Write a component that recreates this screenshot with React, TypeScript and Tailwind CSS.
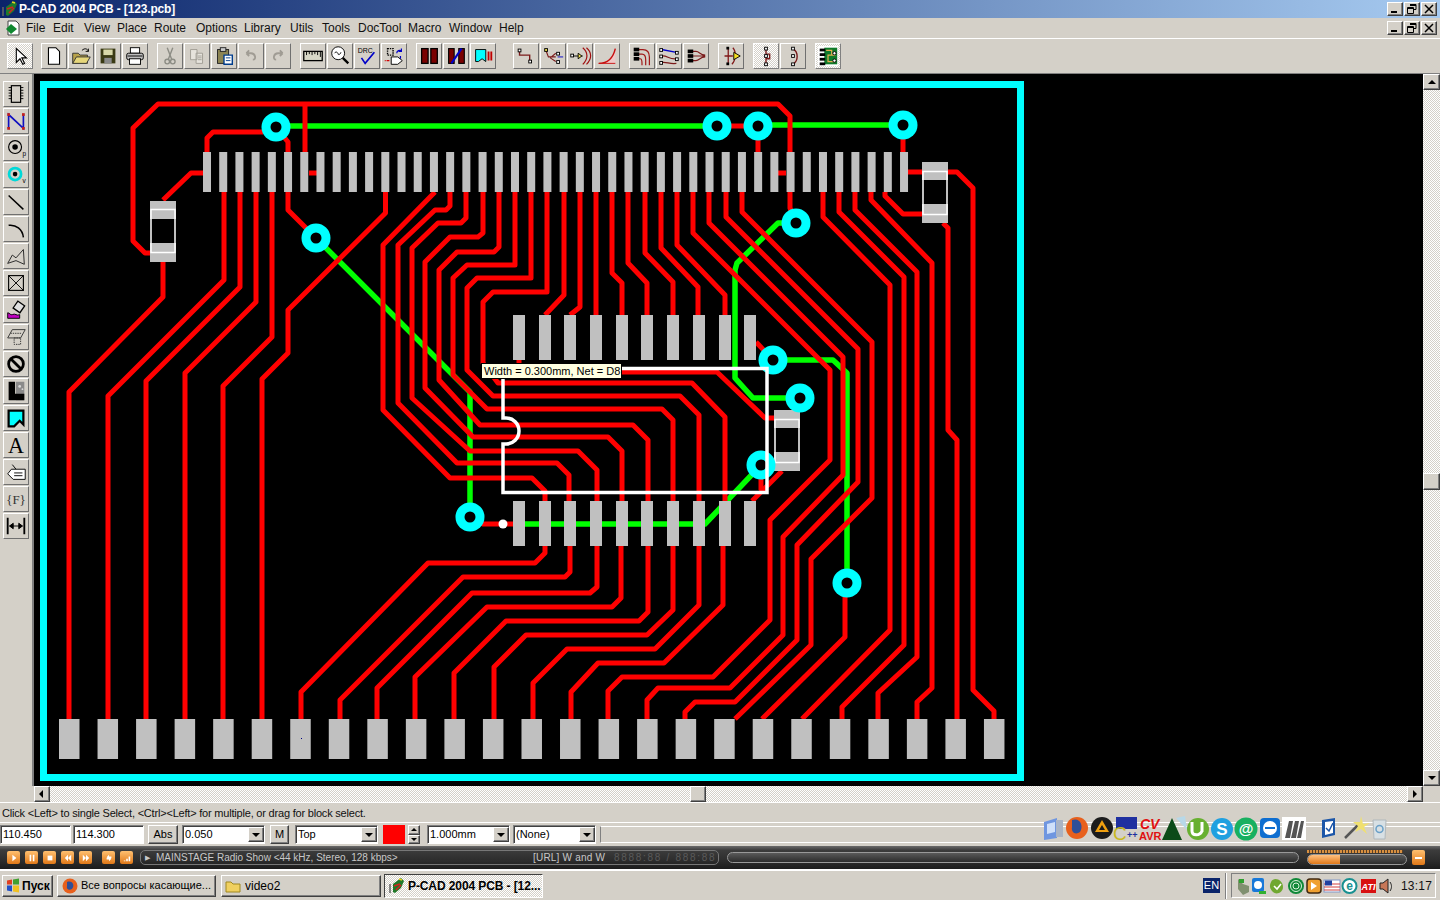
import type { ReactNode } from 'react';

const raised = 'border border-t-white border-l-white border-r-[#404040] border-b-[#404040] bg-[#d4d0c8] shadow-[inset_-1px_-1px_0_#808080]';
const toolRaised = 'border border-t-white border-l-white border-r-[#707070] border-b-[#707070] bg-[#d4d0c8]';
const sunken = 'border border-t-[#808080] border-l-[#808080] border-r-white border-b-white bg-white shadow-[inset_1px_1px_0_#404040]';
const dither = 'bg-[repeating-conic-gradient(#d4d0c8_0_25%,#ffffff_0_50%)] bg-[length:2px_2px]';
const pressed = 'border border-t-[#404040] border-l-[#404040] border-r-white border-b-white';

const TRACES = [
  '150,253 145,253 133,241 133,128 158,104 778,104 790,116 790,208 796,223',
  '305,104 305,152',
  '263,132 213,132 207,138 207,152',
  '276,127 288,142 288,210 316,238',
  '309,173 317,173',
  '203,173 191,173 163,200',
  '163,262 163,297 69,392 69,719',
  '224,192 224,280 108,396 108,719',
  '240,192 240,287 146,381 146,719',
  '256,192 256,302 185,373 185,719',
  '272,192 272,337 223,386 223,719',
  '385.5,192 385.5,213 288,310 288,353 262,379 262,719',
  '435,192 383,245 383,410 450,478 532,478 545,491 545,501',
  '450,192 450,206 446,210 435,210 398,245 398,403 457,463 557,463 569,475 569,501',
  '466,192 466,218 461,223 438,223 412,248 412,398 470,451 578,451 597,470 597,501',
  '483,192 483,233 478,237 450,237 425,262 425,388 473,437 608,437 622,451 622,501',
  '499,192 499,247 494,252 457,252 439,270 439,380 480,425 633,425 648,440 648,501',
  '515,192 515,265 467,265 453,278 453,375 487,409 662,409 673,420 673,501',
  '531,192 531,278 477,278 467,288 467,370 493,396 680,396 699,415 699,501',
  '547,192 547,292 493,292 483,302 483,363 498,383 692,383 725,417 725,501',
  '564,192 564,295 545,315',
  '580,192 580,307 570,315',
  '596,192 596,315',
  '612,192 612,273 622,283 622,315',
  '628,192 628,263 647,283 647,315',
  '645,192 645,253 673,282 673,315',
  '661,192 661,248 698,287 698,315',
  '677,192 677,245 725,295 725,315',
  '519,360 519,372 717,372 765,418 775,418',
  '693,192 693,233 830,370 830,460 770,520 770,620 713,677 622,677 608,691 608,719',
  '709,192 709,223 843,357 843,475 783,537 783,635 730,688 658,688 647,700 647,719',
  '726,192 726,217 858,349 858,482 797,545 797,640 735,702 695,702 685,712 685,719',
  '742,192 742,212 872,342 872,498 811,559 811,645 735,719',
  '758,126 758,152',
  '903,126 903,152',
  '717,126 758,126',
  '778,173 786,173',
  '908,172 923,172',
  '948,172 957,172 973,188 973,690 994,711 994,719',
  '885,192 885,196 903,214 923,214',
  '943,223 948,228 948,430 957,440 957,719',
  '823,192 823,217 890,285 890,630 802,719',
  '839,192 839,212 904,277 904,645 842,707 842,719',
  '855,192 855,210 917,272 917,657 878,693 878,719',
  '871,192 871,200 932,263 932,688 917,702 917,719',
  '847,583 845,597 845,637 762,719',
  '756,342 773,360',
  '782,471 752,501',
  '761,465 761,490',
  '470,517 483,524 513,524',
  '545,546 545,553 535,563 428,563 301,692 301,719',
  '570,546 570,572 565,577 463,577 340,700 340,719',
  '597,546 597,587 590,593 472,593 377,688 377,719',
  '621,546 621,598 612,607 487,607 415,677 415,719',
  '648,546 648,612 639,621 506,621 454,673 454,719',
  '673,546 673,610 647,635 526,635 494,667 494,719',
  '699,546 699,605 655,649 567,649 533,683 533,719',
  '723,546 723,605 664,663 598,663 571,692 571,719',
];

const GREEN = [
  '276,126 717,126',
  '758,125 903,125',
  '316,238 470,392 470,517',
  '796,223 778,223 737,263 735,270 735,378 753,398 800,398',
  '773,360 833,360 847,373 847,583',
  '513,524 705,524 761,465',
];

const VIAS = [
  [276, 127], [316, 238], [717, 126], [758, 126], [903, 125], [796, 223],
  [773, 360], [800, 398], [761, 465], [470, 517], [847, 583],
];

const ICX = [513, 539, 564, 590, 616, 641, 667, 693, 719, 744];

function Chip({ x, y }: { x: number; y: number }) {
  return (
    <g>
      <rect x={x} y={y} width="26" height="61" fill="#c0c0c0" />
      <rect x={x} y={y + 18} width="26" height="24" fill="#000" />
    </g>
  );
}

function Board() {
  return (
    <svg viewBox="34 74 1389 712" className="block h-[712px] w-[1389px]">
      <rect x="34" y="74" width="1389" height="712" fill="#000" />
      <rect x="43.5" y="84.5" width="977" height="693" fill="none" stroke="#00ffff" strokeWidth="7" />
      {GREEN.map((p) => (
        <polyline key={p} points={p} fill="none" stroke="#00ff00" strokeWidth="5.5" strokeLinejoin="round" />
      ))}
      {TRACES.map((p) => (
        <polyline key={p} points={p} fill="none" stroke="#ff0000" strokeWidth="5" strokeLinejoin="round" />
      ))}
      {Array.from({ length: 44 }, (_, i) => (
        <rect key={i} x={203 + i * 16.21} y="152" width="8" height="40" fill="#c0c0c0" />
      ))}
      {Array.from({ length: 25 }, (_, i) => (
        <rect key={i} x={59 + i * 38.54} y="719" width="20.5" height="40" fill="#c0c0c0" />
      ))}
      {ICX.map((x) => (
        <g key={x}>
          <rect x={x} y="315" width="12" height="45" fill="#c0c0c0" />
          <rect x={x} y="501" width="12" height="45" fill="#c0c0c0" />
        </g>
      ))}
      <Chip x={150} y={201} />
      <Chip x={922} y={162} />
      <Chip x={774} y={410} />
      <rect x="151" y="209.5" width="24" height="43" fill="none" stroke="#fff" strokeWidth="1.5" />
      <rect x="923" y="171.5" width="24" height="43" fill="none" stroke="#fff" strokeWidth="1.5" />
      <rect x="775" y="419.5" width="24" height="43" fill="none" stroke="#fff" strokeWidth="1.5" />
      {VIAS.map(([x, y]) => (
        <g key={`${x}-${y}`}>
          <circle cx={x} cy={y} r="14.5" fill="#00ffff" />
          <circle cx={x} cy={y} r="5.5" fill="#000" />
        </g>
      ))}
      <path d="M503 368.5H767V492.5H503V444H506A13 13 0 0 0 506 418H503Z" fill="none" stroke="#fff" strokeWidth="3.5" />
      <circle cx="503" cy="524" r="4.5" fill="#fff" />
      <rect x="301" y="738" width="1" height="1" fill="#000080" />
    </svg>
  );
}

function Glyph({ children }: { children: ReactNode }) {
  return (
    <svg viewBox="0 0 26 26" className="h-[24px] w-[24px]">
      {children}
    </svg>
  );
}

const TOP_ICONS: ReactNode[][] = [
  [
    <>
      <path d="M9 5v15l4-4 3 6 2-1-3-6h5z" fill="#fff" stroke="#000" strokeWidth="1.2" />
    </>,
  ],
  [
    <path d="M7 4h8l4 4v14H7z" fill="#fff" stroke="#000" strokeWidth="1.2" />,
    <>
      <path d="M4 10h6l2 2h8v9H4z" fill="#b8a24a" stroke="#333" />
      <path d="M4 21l4-7h15l-4 7z" fill="#e6d67a" stroke="#333" />
      <path d="M14 7c3-3 6-2 7 1M21 5v3h-3" fill="none" stroke="#000" />
    </>,
    <>
      <rect x="5" y="5" width="16" height="16" fill="#3a3a14" />
      <rect x="8" y="6" width="10" height="6" fill="#d8d8a8" />
      <rect x="9" y="15" width="8" height="6" fill="#8a8a8a" />
    </>,
    <>
      <rect x="8" y="4" width="10" height="6" fill="#fff" stroke="#000" />
      <rect x="4" y="10" width="18" height="7" rx="2" fill="#bdbdbd" stroke="#000" />
      <rect x="7" y="16" width="12" height="6" fill="#fff" stroke="#000" />
      <path d="M5 13h16" stroke="#000" />
    </>,
  ],
  [
    <>
      <circle cx="10" cy="19" r="2.5" fill="none" stroke="#8c8c84" strokeWidth="1.5" />
      <circle cx="16" cy="19" r="2.5" fill="none" stroke="#8c8c84" strokeWidth="1.5" />
      <path d="M11 17L16 4M15 17L10 4" stroke="#8c8c84" strokeWidth="1.5" />
    </>,
    <>
      <path d="M6 6h7v11H6zM12 10h7v11h-7z" fill="#e6e3dc" stroke="#a09c94" />
      <path d="M14 13h4M14 15h4M14 17h4" stroke="#a09c94" />
    </>,
    <>
      <rect x="6" y="6" width="12" height="15" fill="#8c8452" stroke="#222" />
      <rect x="9" y="4" width="6" height="4" fill="#ccc" stroke="#222" />
      <path d="M13 12h9v10h-9z" fill="#fff" stroke="#003c8c" strokeWidth="1.5" />
      <path d="M15 15h5M15 18h5" stroke="#003c8c" />
    </>,
    <path d="M8 10h5c5 0 6 7 2 7M8 10l3-3M8 10l3 3" fill="none" stroke="#a09c94" strokeWidth="2" />,
    <path d="M18 10h-5c-5 0-6 7-2 7M18 10l-3-3M18 10l-3 3" fill="none" stroke="#a09c94" strokeWidth="2" />,
  ],
  [
    <>
      <rect x="3" y="8" width="20" height="10" fill="#d8d8c8" stroke="#000" strokeWidth="1.4" />
      <path d="M6 8v4M9 8v3M12 8v4M15 8v3M18 8v4M21 8v6" stroke="#000" />
    </>,
    <>
      <circle cx="11" cy="10" r="7" fill="#fff" stroke="#000" />
      <path d="M7 10c2-3 4 0 4 1s3 0 3-2" fill="none" stroke="#000" />
      <path d="M16 15l6 6" stroke="#000" strokeWidth="2.5" />
    </>,
    <>
      <text x="3" y="10" fontSize="7.5" fontFamily="Liberation Sans" fill="#000">DRC</text>
      <path d="M7 15l4 6 10-12" fill="none" stroke="#0000c8" strokeWidth="1.8" />
    </>,
    <>
      <rect x="6" y="5" width="6" height="7" fill="none" stroke="#000" strokeDasharray="1.5 1" strokeWidth="1.5" />
      <path d="M16 10c0-3 3-4 5-2M21 5v3h-3M20 13v3" fill="none" stroke="#0000c8" strokeWidth="1.3" />
      <path d="M5 18h3M3 18h1" stroke="#d00000" strokeWidth="1.5" />
      <path d="M10 14h7l5 4-5 4h-7z" fill="#fff" stroke="#000" />
    </>,
  ],
  [
    <>
      <rect x="5" y="5" width="7" height="16" fill="#7a0000" stroke="#000" strokeWidth="1.4" />
      <rect x="15" y="5" width="7" height="16" fill="#7a0000" stroke="#000" strokeWidth="1.4" />
    </>,
    <>
      <rect x="5" y="5" width="6" height="16" fill="#7a0000" stroke="#000" strokeWidth="1.2" />
      <rect x="16" y="5" width="6" height="16" fill="#7a0000" stroke="#000" strokeWidth="1.2" />
      <path d="M8 21L19 5" stroke="#0000c8" strokeWidth="2.2" />
    </>,
    <>
      <path d="M5 6h11v13l-4-3-4 3H5z" fill="#00ffff" stroke="#000" />
      <path d="M19 8v10M22 8v10" stroke="#c00000" strokeWidth="2" />
    </>,
  ],
  [
    <>
      <path d="M6 7v5h11v6" fill="none" stroke="#7a1a1a" strokeWidth="1.5" />
      <rect x="4.5" y="5.5" width="3" height="3" fill="#fff" stroke="#000" />
      <rect x="16" y="17.5" width="3" height="3" fill="#fff" stroke="#000" />
    </>,
    <>
      <path d="M5 6l3 8h8M16 10l-6 5M16 19l-6-4" fill="none" stroke="#7a1a1a" strokeWidth="1.2" />
      <rect x="4" y="5" width="3" height="3" fill="#f0e050" stroke="#000" />
      <rect x="17" y="9" width="3" height="3" fill="#fff" stroke="#000" />
      <rect x="17" y="18" width="3" height="3" fill="#fff" stroke="#000" />
      <path d="M18 14h6" stroke="#0000c8" />
    </>,
    <>
      <path d="M16 4c6 5 6 12 0 18M20 4c6 5 6 12 0 18" fill="none" stroke="#a01010" strokeWidth="1.3" />
      <path d="M6 13h10" stroke="#000" />
      <path d="M11 10l4 3-4 3z" fill="#f0e050" stroke="#000" />
      <rect x="3" y="11" width="3" height="3" fill="#fff" stroke="#000" />
    </>,
    <>
      <path d="M5 21c7 0 14-3 17-16v16z" fill="#f0c8c8" />
      <path d="M4 21c8 0 15-3 18-16" fill="none" stroke="#c81010" strokeWidth="1.6" />
      <path d="M4 21h18" stroke="#c81010" />
    </>,
  ],
  [
    <>
      <path d="M9 6h5c6 0 7 5 7 8v9M9 11h4c3 0 4 3 4 6v6M9 16h2c2 0 2 3 2 5v2" fill="none" stroke="#a01818" strokeWidth="1.3" />
      <rect x="4" y="4" width="6" height="4" fill="#000" />
      <rect x="4" y="9" width="6" height="4" fill="#000" />
      <rect x="4" y="14" width="6" height="4" fill="#000" />
    </>,
    <>
      <path d="M5 6l16 3" stroke="#0000c8" strokeWidth="1.5" />
      <path d="M5 13c6-1 8 4 16 3M5 20c6-1 8 2 16 1" fill="none" stroke="#7a1a1a" strokeWidth="1.3" />
      <rect x="3" y="5" width="3" height="3" fill="#fff" stroke="#000" />
      <rect x="3" y="12" width="3" height="3" fill="#fff" stroke="#000" />
      <rect x="3" y="19" width="3" height="3" fill="#fff" stroke="#000" />
      <rect x="20" y="8" width="3" height="3" fill="#fff" stroke="#000" />
      <rect x="20" y="15" width="3" height="3" fill="#fff" stroke="#000" />
    </>,
    <>
      <path d="M9 8h4c4 0 4 4 10 4M9 13h14M9 18h4c4 0 4-4 10-4" fill="none" stroke="#7a1a1a" strokeWidth="1.2" />
      <rect x="4" y="6" width="6" height="4" fill="#000" />
      <rect x="4" y="11" width="6" height="4" fill="#000" />
      <rect x="4" y="16" width="6" height="4" fill="#000" />
    </>,
  ],
  [
    <>
      <path d="M10 4v18M15 4c4 4 3 14-1 18M6 13h9" fill="none" stroke="#801818" strokeWidth="1.4" />
      <rect x="8" y="3" width="3" height="3" fill="#000" />
      <rect x="8" y="20" width="3" height="3" fill="#000" />
      <path d="M16 9l7 4-7 4z" fill="#f4e020" stroke="#000" />
    </>,
  ],
  [
    <>
      <path d="M13 5v6h4v5h-4v6" fill="none" stroke="#7a1a1a" strokeWidth="1.5" />
      <rect x="11.5" y="3.5" width="3" height="3" fill="#fff" stroke="#000" />
      <rect x="11.5" y="11.5" width="3" height="3" fill="#fff" stroke="#000" />
      <rect x="11.5" y="20.5" width="3" height="3" fill="#fff" stroke="#000" />
    </>,
    <>
      <path d="M13 5c6 4 6 13 0 17" fill="none" stroke="#7a1a1a" strokeWidth="1.5" />
      <rect x="11.5" y="3.5" width="3" height="3" fill="#fff" stroke="#000" />
      <rect x="11.5" y="11.5" width="3" height="3" fill="#fff" stroke="#000" />
      <rect x="11.5" y="20.5" width="3" height="3" fill="#fff" stroke="#000" />
    </>,
  ],
  [
    <>
      <rect x="2" y="2" width="22" height="22" fill="#fff" />
      <rect x="9" y="4" width="14" height="18" fill="#0f7a2a" />
      <path d="M11 7h6v5h-4v7h8M17 12h4" fill="none" stroke="#e0b050" strokeWidth="1.3" />
      <rect x="4" y="5" width="6" height="3" fill="#000" />
      <rect x="4" y="10" width="6" height="3" fill="#000" />
      <rect x="4" y="15" width="6" height="3" fill="#000" />
      <rect x="4" y="20" width="6" height="3" fill="#000" />
      <circle cx="20" cy="10" r="1.8" fill="#fff" stroke="#000" />
      <circle cx="20" cy="18" r="1.8" fill="#fff" stroke="#000" />
    </>,
  ],
];

const TOP_OFFSETS = ['ml-[7px]', 'ml-[8px]', 'ml-[9px]', 'ml-[9px]', 'ml-[9px]', 'ml-[17px]', 'ml-[9px]', 'ml-[9px]', 'ml-[9px]', 'ml-[9px]'];

const LEFT_ICONS: ReactNode[] = [
  <>
    <rect x="8" y="4" width="10" height="18" fill="none" stroke="#000" strokeWidth="1.3" />
    <path d="M5 6h3M5 9h3M5 12h3M5 15h3M5 18h3M18 6h3M18 9h3M18 12h3M18 15h3M18 18h3" stroke="#000" />
  </>,
  <>
    <path d="M5 21V6l16 15V6" fill="none" stroke="#1010c0" strokeWidth="1.8" />
    <rect x="3.5" y="4.5" width="3" height="3" fill="#c02020" />
    <rect x="19.5" y="4.5" width="3" height="3" fill="#c02020" />
    <rect x="3.5" y="19.5" width="3" height="3" fill="#c02020" />
    <rect x="19.5" y="19.5" width="3" height="3" fill="#c02020" />
  </>,
  <>
    <circle cx="12" cy="12" r="7" fill="none" stroke="#000" strokeWidth="1.2" />
    <circle cx="12" cy="12" r="3" fill="#000" />
    <text x="20" y="22" fontSize="7" fontFamily="Liberation Sans" fill="#000">p</text>
  </>,
  <>
    <circle cx="12" cy="12" r="6.5" fill="none" stroke="#00d8d8" strokeWidth="3" />
    <circle cx="12" cy="12" r="2.5" fill="#000" />
    <text x="20" y="22" fontSize="7" fontFamily="Liberation Sans" fill="#000">v</text>
  </>,
  <path d="M5 6l16 15" stroke="#000" strokeWidth="1.6" />,
  <path d="M5 9c8-1 15 4 16 13" fill="none" stroke="#000" strokeWidth="1.6" />,
  <path d="M4 21l5-9 4 3 8-9 1 16-9-4z" fill="none" stroke="#222" />,
  <>
    <rect x="5" y="5" width="16" height="16" fill="none" stroke="#000" strokeWidth="1.2" />
    <path d="M5 5l16 16M21 5L5 21" stroke="#000" />
  </>,
  <>
    <rect x="12" y="5" width="9" height="9" fill="#e0e0e0" stroke="#000" strokeWidth="1.4" transform="rotate(35 16 9)" />
    <path d="M4 16v6h13v-4c-3 2-5-2-8 0-2 1-3-2-5-2z" fill="#c000c0" stroke="#000" />
  </>,
  <>
    <path d="M9 5h14l-5 9H4z" fill="none" stroke="#333" />
    <path d="M7 9h12M11 14h7v7h-7z" fill="none" stroke="#333" strokeDasharray="1.5 1" />
  </>,
  <>
    <circle cx="13" cy="13" r="8" fill="none" stroke="#000" strokeWidth="3" />
    <path d="M7 7l12 12" stroke="#000" strokeWidth="3" />
  </>,
  <>
    <path d="M13 3h9v20h-9z" fill="#8a8a8a" />
    <path d="M5 3h7v13h10v7H5z" fill="#000" />
    <circle cx="17" cy="8" r="1.5" fill="#d8d8d8" />
    <circle cx="20" cy="11" r="1" fill="#d8d8d8" />
  </>,
  <path d="M5 5h16v15l-4-4-6 6H5z" fill="#00ffff" stroke="#000" strokeWidth="2.4" />,
  <text x="13" y="22" textAnchor="middle" fontSize="24" fontFamily="Liberation Serif" fill="#000">A</text>,
  <>
    <path d="M8 10h15v11H10l-6-6z" fill="#fff" stroke="#000" />
    <path d="M11 14h9M11 17h9" stroke="#000" />
    <path d="M9 5l4 5" stroke="#000" />
  </>,
  <text x="13" y="18" textAnchor="middle" fontSize="14" fontFamily="Liberation Serif" fill="#333">{'{F}'}</text>,
  <>
    <path d="M4 4v18M22 4v18" stroke="#000" strokeWidth="2" />
    <path d="M6 13h14M6 13l4-3v6zM20 13l-4-3v6z" fill="#000" stroke="#000" />
  </>,
];

function ToolBtn({ children, on = false }: { children: ReactNode; on?: boolean }) {
  return (
    <div className={`flex h-[26px] w-[26px] items-center justify-center ${on ? `border border-t-white border-l-white border-r-[#808080] border-b-[#808080] ${dither}` : toolRaised}`}>
      <Glyph>{children}</Glyph>
    </div>
  );
}

function WinBtn({ kind }: { kind: 'min' | 'max' | 'close' }) {
  return (
    <div className={`flex h-[14px] w-[16px] items-center justify-center ${raised}`}>
      <svg viewBox="0 0 12 10" className="h-[10px] w-[12px]">
        {kind === 'min' && <path d="M2 8h6" stroke="#000" strokeWidth="2" />}
        {kind === 'max' && <path d="M4 .5h6v5H8M1.500 3.500h6v6h-6zM1.500 4.500h6M4 1.500h6" fill="none" stroke="#000" />}
        {kind === 'close' && <path d="M2 1l8 8M10 1l-8 8" stroke="#000" strokeWidth="1.5" />}
      </svg>
    </div>
  );
}

function WinBtns() {
  return (
    <div className="mr-[3px] ml-auto flex gap-[1px]">
      <WinBtn kind="min" />
      <WinBtn kind="max" />
      <WinBtn kind="close" />
    </div>
  );
}

function PcbIcon({ className }: { className: string }) {
  return (
    <svg viewBox="0 0 16 18" className={className}>
      <path d="M1 16V7" stroke="#666" strokeWidth="1.5" />
      <path d="M4 15V7l8-6 3 3-3 7-6 5z" fill="#1f7a2a" />
      <path d="M5 9l6-2M7 13l5-5" stroke="#d82020" strokeWidth="1.5" />
      <path d="M10 2l3 1" stroke="#e8d020" strokeWidth="1.5" />
    </svg>
  );
}

const MENU: [string, string][] = [
  ['File', 'w-[27px]'], ['Edit', 'w-[31px]'], ['View', 'w-[33px]'], ['Place', 'w-[37px]'], ['Route', 'w-[42px]'],
  ['Options', 'w-[48px]'], ['Library', 'w-[46px]'], ['Utils', 'w-[32px]'], ['Tools', 'w-[36px]'], ['DocTool', 'w-[50px]'],
  ['Macro', 'w-[41px]'], ['Window', 'w-[50px]'], ['Help', 'w-[30px]'],
];

function Arrow({ dir }: { dir: 'l' | 'r' | 'u' | 'd' }) {
  const d = { l: 'M6 1v8L2 5z', r: 'M3 1v8l4-4z', u: 'M1 7h8L5 3z', d: 'M1 3h8L5 7z' }[dir];
  return (
    <svg viewBox="0 0 10 10" className="h-[10px] w-[10px]">
      <path d={d} fill="#000" />
    </svg>
  );
}

function Combo({ value, width }: { value: string; width: string }) {
  return (
    <div className={`flex h-[19px] items-center justify-between pl-[2px] ${sunken} ${width}`}>
      <span className="text-[11px] leading-none text-black">{value}</span>
      <div className={`flex h-[15px] w-[16px] items-center justify-center ${raised}`}>
        <Arrow dir="d" />
      </div>
    </div>
  );
}

function AimpBtn({ d, mr }: { d: string; mr: string }) {
  return (
    <div className={`flex h-[13px] w-[13px] items-center justify-center rounded-[2px] bg-[linear-gradient(#ffc070,#e07818)] ${mr}`}>
      <svg viewBox="0 0 10 10" className="h-[8px] w-[8px]">
        <path d={d} fill="#fff" />
      </svg>
    </div>
  );
}

function QuickLaunch() {
  return (
    <svg viewBox="1040 814 352 30" className="absolute top-[814px] left-[1040px] h-[30px] w-[352px]">
      <path d="M1044 822l13-4v20l-13 2z" fill="#6f96e0" />
      <path d="M1047 824l8-2v10l-8 2z" fill="#cfe0fa" />
      <path d="M1056 820h7v17h-7z" fill="#aab4c4" />
      <circle cx="1077" cy="828" r="11" fill="#e8601c" />
      <path d="M1072 820c8-3 12 6 8 12-4 3-9 1-8-5z" fill="#2f4f98" />
      <circle cx="1102" cy="828" r="11" fill="#1c1c1c" />
      <path d="M1102 820l7 12h-14z" fill="#f0a010" />
      <path d="M1102 825l3 5h-6z" fill="#1c1c1c" />
      <rect x="1116" y="817" width="21" height="12" fill="#2030a0" />
      <text x="1113" y="840" fontSize="19" fontFamily="Liberation Sans" fill="#c8b820">C</text>
      <text x="1127" y="838" fontSize="9" fontWeight="bold" fontFamily="Liberation Sans" fill="#2030a0">++</text>
      <text x="1140" y="829" fontSize="14" fontWeight="bold" fontStyle="italic" fontFamily="Liberation Sans" fill="#e01010">CV</text>
      <text x="1139" y="840" fontSize="11" fontWeight="bold" fontFamily="Liberation Sans" fill="#e01010">AVR</text>
      <path d="M1172 818l-10 22h20z" fill="#0c4a18" />
      <path d="M1176 818l9-2 2 14z" fill="#b8d8e8" />
      <circle cx="1198" cy="829" r="11" fill="#68b030" />
      <path d="M1192 822v9c0 5 8 5 10 0v-9M1202 822v10" fill="none" stroke="#fff" strokeWidth="3" />
      <circle cx="1222" cy="829" r="11" fill="#20a0e0" />
      <text x="1222" y="835" textAnchor="middle" fontSize="17" fontWeight="bold" fontFamily="Liberation Sans" fill="#fff">S</text>
      <circle cx="1246" cy="829" r="11.500" fill="#18b060" />
      <text x="1246" y="834" textAnchor="middle" fontSize="15" fontWeight="bold" fontFamily="Liberation Sans" fill="#fff">@</text>
      <rect x="1260" y="818" width="20" height="20" rx="4" fill="#0e6ed0" />
      <circle cx="1270" cy="828" r="7" fill="#fff" />
      <path d="M1265 828h10" stroke="#0e6ed0" strokeWidth="2" />
      <rect x="1282" y="817" width="24" height="23" fill="#fff" />
      <path d="M1285 838l4-17h4l-3 17zM1291 838l4-17h4l-3 17zM1297 838l4-17h3l-3 17z" fill="#555" />
      <path d="M1322 820l13-2v17l-13 3z" fill="#1c56a8" />
      <path d="M1325 822l8-1v12l-8 2z" fill="#fff" />
      <path d="M1326 828l3 3 4-8" fill="none" stroke="#1c56a8" strokeWidth="1.5" />
      <path d="M1345 838l14-14" stroke="#555" strokeWidth="2.5" />
      <path d="M1361 816l2 8 7-1-6 4 3 7-6-5-6 3 3-6-5-4 7 0z" fill="#f0e070" />
      <path d="M1373 820h13l-1 19h-11z" fill="#d8e0e4" stroke="#b0b8bc" />
      <circle cx="1379.500" cy="829" r="3.500" fill="none" stroke="#6aa0c8" strokeWidth="1.5" />
    </svg>
  );
}

function Tray() {
  return (
    <svg viewBox="0 0 143 20" className="h-[20px] w-[143px]">
      <path d="M2 3l5 5 6 2v6l-6 3-5-6z" fill="#809070" />
      <path d="M3 3h5v4H3z" fill="#30a030" />
      <g transform="translate(-6 0)">
        <rect x="22" y="2" width="12" height="14" rx="2" fill="#1878d8" />
        <circle cx="28" cy="9" r="4" fill="#fff" />
        <rect x="29" y="15" width="7" height="3" fill="#30b030" />
      </g>
      <g transform="translate(-7 0)">
        <path d="M42 6c3-6 12-2 12 5 0 6-7 8-10 5s-4-6-2-10z" fill="#70a830" />
        <path d="M45 10l3 3 4-5" fill="none" stroke="#fff" strokeWidth="1.6" />
      </g>
      <g transform="translate(-9 0)">
        <circle cx="69" cy="10" r="8" fill="#108838" />
        <circle cx="69" cy="10" r="5.500" fill="none" stroke="#d8f0d8" />
        <circle cx="69" cy="10" r="3" fill="none" stroke="#d8f0d8" />
      </g>
      <g transform="translate(-9 0)">
        <rect x="80" y="3" width="14" height="14" rx="3" fill="#f0a030" stroke="#402810" strokeWidth="1.5" />
        <path d="M84 6v8l6-4z" fill="#fff" />
      </g>
      <g transform="translate(-13 0)">
        <rect x="101" y="4" width="16" height="12" fill="#fff" stroke="#8098c8" />
        <path d="M101 8h16M101 11h16M101 14h16" stroke="#d04040" />
        <rect x="102" y="4.500" width="7" height="5" fill="#2040a0" />
      </g>
      <g transform="translate(-14.500 0)">
        <circle cx="128" cy="10" r="7" fill="#fff" stroke="#189090" strokeWidth="2" />
        <text x="128" y="14" textAnchor="middle" fontSize="12" fontWeight="bold" fontFamily="Liberation Sans" fill="#189090">e</text>
      </g>
      <g transform="translate(-13 0)">
        <rect x="138" y="3" width="15" height="14" fill="#d81010" />
        <text x="145.500" y="14" textAnchor="middle" fontSize="9" fontWeight="bold" fontStyle="italic" fontFamily="Liberation Sans" fill="#fff">ATI</text>
      </g>
    </svg>
  );
}

export default function App() {
  return (
    <div className="relative h-[900px] w-[1440px] overflow-hidden bg-[#d4d0c8] font-['Liberation_Sans',Arial,sans-serif] text-black">
      {/* title bar */}
      <div className="flex h-[18px] items-center bg-[linear-gradient(90deg,#0a246a,#a6caf0)]">
        <PcbIcon className="ml-[2px] h-[18px] w-[16px]" />
        <span className="ml-[1px] text-[12px] leading-none font-bold tracking-[-0.15px] text-white">P-CAD 2004 PCB - [123.pcb]</span>
        <WinBtns />
      </div>

      {/* menu */}
      <div className="flex h-[20px] items-center">
        <svg viewBox="0 0 16 16" className="mr-[5px] ml-[5px] h-[16px] w-[16px]">
          <path d="M3 1h8l3 3v11H3z" fill="#fff" stroke="#444" />
          <path d="M1 9l5-5 6 5-6 5z" fill="#118830" />
        </svg>
        {MENU.map(([label, w]) => (
          <span key={label} className={`text-[12px] leading-none whitespace-nowrap text-[#111] ${w}`}>{label}</span>
        ))}
        <WinBtns />
      </div>

      {/* main toolbar */}
      <div className="flex h-[36px] items-center border-t border-b border-t-white border-b-[#808080]">
        {TOP_ICONS.map((group, g) => (
          <div key={g} className={`flex gap-[1px] ${TOP_OFFSETS[g]}`}>
            {group.map((icon, i) => (
              <ToolBtn key={i} on={(g === 0 && i === 0) || (g === 8 && i === 0) || g === 9}>{icon}</ToolBtn>
            ))}
          </div>
        ))}
      </div>

      {/* middle: side tools, board, vertical scroll */}
      <div className="flex h-[712px]">
        <div className="flex w-[34px] flex-col gap-[1px] border-r-2 border-r-[#808080] pt-[7px] pl-[3px]">
          {LEFT_ICONS.map((icon, i) => (
            <ToolBtn key={i}>{icon}</ToolBtn>
          ))}
        </div>
        <div className="relative h-[712px] w-[1389px] shrink-0">
          <Board />
          <div className="absolute top-[289px] left-[447px] flex h-[16px] w-[141px] items-center border border-black bg-[#ffffe1] pl-[2px] text-[11px] leading-none whitespace-nowrap text-black">
            Width = 0.300mm, Net = D8
          </div>
        </div>
        <div className="flex w-[17px] flex-col">
          <div className={`flex h-[16px] items-center justify-center ${raised}`}><Arrow dir="u" /></div>
          <div className={`h-[383px] ${dither}`} />
          <div className={`h-[17px] ${raised}`} />
          <div className={`flex-1 ${dither}`} />
          <div className={`flex h-[16px] items-center justify-center ${raised}`}><Arrow dir="d" /></div>
        </div>
      </div>

      {/* horizontal scroll */}
      <div className="flex h-[16px] pl-[34px]">
        <div className="flex w-[1389px]">
          <div className={`flex w-[16px] items-center justify-center ${raised}`}><Arrow dir="l" /></div>
          <div className={`w-[640px] ${dither}`} />
          <div className={`w-[16px] ${raised}`} />
          <div className={`flex-1 ${dither}`} />
          <div className={`flex w-[16px] items-center justify-center ${raised}`}><Arrow dir="r" /></div>
        </div>
      </div>

      {/* status line */}
      <div className="flex h-[21px] items-center border-t border-b border-t-white border-b-white pt-[2px] pl-[2px] text-[11px] leading-none tracking-[-0.2px] whitespace-nowrap text-[#111]">
        {'Click <Left> to single Select, <Ctrl><Left> for multiple, or drag for block select.'}
      </div>

      {/* coordinates row */}
      <div className="flex h-[23px] items-center">
        <div className={`flex h-[19px] w-[71px] items-center pl-[2px] text-[11px] leading-none ${sunken}`}>110.450</div>
        <div className={`ml-[2px] flex h-[19px] w-[71px] items-center pl-[2px] text-[11px] leading-none ${sunken}`}>114.300</div>
        <div className={`ml-[4px] flex h-[19px] w-[30px] items-center justify-center text-[11px] leading-none ${raised}`}>Abs</div>
        <Combo value="0.050" width="ml-[4px] w-[83px]" />
        <div className={`ml-[5px] flex h-[19px] w-[19px] items-center justify-center text-[11px] leading-none ${raised}`}>M</div>
        <Combo value="Top" width="ml-[6px] w-[83px]" />
        <div className="ml-[5px] h-[19px] w-[22px] bg-[#ff0000]" />
        <div className="ml-[3px] flex h-[19px] w-[12px] flex-col">
          <div className={`flex flex-1 items-center justify-center ${raised}`}><div className="h-0 w-0 border-r-[3px] border-b-[3px] border-l-[3px] border-r-transparent border-b-black border-l-transparent" /></div>
          <div className={`flex flex-1 items-center justify-center ${raised}`}><div className="h-0 w-0 border-t-[3px] border-r-[3px] border-l-[3px] border-t-black border-r-transparent border-l-transparent" /></div>
        </div>
        <Combo value="1.000mm" width="ml-[7px] w-[83px]" />
        <Combo value="(None)" width="ml-[3px] w-[83px]" />
        <div className="ml-[4px] h-[17px] flex-1 border-t border-b border-l border-t-white border-b-white border-l-[#808080]" />
      </div>

      {/* player */}
      <div className="flex h-[25px] items-center border-b-2 border-b-white bg-[linear-gradient(#6a6a6a,#3c3c3c_18%,#2e2e2e_60%,#1c1c1c)] pl-[7px]">
        <AimpBtn d="M3 1v8l5-4z" mr="mr-[5px]" />
        <AimpBtn d="M2 1h2v8H2zM6 1h2v8H6z" mr="mr-[5px]" />
        <AimpBtn d="M2 2h6v6H2z" mr="mr-[5px]" />
        <AimpBtn d="M5 1v8L1 5zM9 1v8L5 5z" mr="mr-[5px]" />
        <AimpBtn d="M1 1v8l4-4zM5 1v8l4-4z" mr="mr-[10px]" />
        <AimpBtn d="M2 4l3-3v2h3v2H5v2zM8 6L5 9V7H2V5h3V3z" mr="mr-[5px]" />
        <AimpBtn d="M1 8h2v1H1zM4 6h2v3H4zM7 3h2v6H7z" mr="mr-[7px]" />
        <div className="flex h-[15px] w-[579px] items-center rounded-[5px] border border-[#777] pl-[4px] text-[10px] leading-none whitespace-nowrap text-[#c8c8c8]">
          <span className="mr-[6px] text-[7px]">▶</span>
          <span className="w-[377px]">{'MAINSTAGE Radio Show <44 kHz, Stereo, 128 kbps>'}</span>
          <span className="w-[81px] tracking-[0.2px]">[URL] W and W</span>
          <span className="tracking-[1.7px] text-[#5a5a5a]">8888:88 / 888:88</span>
        </div>
        <div className="ml-[8px] h-[11px] w-[572px] rounded-full border border-[#999] bg-[linear-gradient(#5a5a5a,#2c2c2c)]" />
        <div className="ml-[8px] flex w-[100px] flex-col gap-[1px]">
          <div className="h-[3px] w-[96px] bg-[repeating-linear-gradient(90deg,#d89040_0_2px,#5a4028_2px_3px)]" />
          <div className="h-[11px] overflow-hidden rounded-full border border-[#999] bg-[linear-gradient(#5a5a5a,#2c2c2c)]">
            <div className="h-full w-[32px] bg-[linear-gradient(#ffc080,#e07818)]" />
          </div>
        </div>
        <div className="ml-[5px] flex h-[15px] w-[13px] items-center justify-center rounded-[2px] bg-[linear-gradient(#ffc070,#e07818)]">
          <div className="h-[2px] w-[7px] bg-white" />
        </div>
      </div>

      {/* taskbar */}
      <div className="flex h-[29px] items-center pl-[2px] text-[11px] leading-none">
        <div className={`flex h-[22px] w-[51px] items-center pl-[3px] text-[12px] font-bold ${raised}`}>
          <svg viewBox="0 0 14 14" className="mr-[2px] h-[15px] w-[14px]">
            <path d="M1 2l5-1v5H1z" fill="#e04020" />
            <path d="M7 1l6-1v6H7z" fill="#40a030" />
            <path d="M1 7h5v6l-5-1z" fill="#2050c8" />
            <path d="M7 7h6v7l-6-1z" fill="#f0c020" />
          </svg>
          Пуск
        </div>
        <div className={`ml-[4px] flex h-[22px] w-[159px] items-center pl-[4px] whitespace-nowrap ${raised}`}>
          <svg viewBox="0 0 16 16" className="mr-[3px] h-[16px] w-[16px]">
            <circle cx="8" cy="8" r="7.500" fill="#e8601c" />
            <path d="M5 4c6-2 8 4 5 7-3 2-6 0-5-3z" fill="#2f4f98" />
          </svg>
          Все вопросы касающие...
        </div>
        <div className={`ml-[5px] flex h-[22px] w-[160px] items-center pl-[3px] text-[12px] ${raised}`}>
          <svg viewBox="0 0 16 16" className="mr-[4px] h-[16px] w-[16px]">
            <path d="M1 4h5l2 2h7v8H1z" fill="#f0d060" stroke="#a08820" />
          </svg>
          video2
        </div>
        <div className={`ml-[3px] flex h-[24px] w-[159px] items-center pl-[4px] text-[12px] font-bold tracking-[-0.1px] whitespace-nowrap ${pressed} ${dither}`}>
          <PcbIcon className="mr-[3px] h-[18px] w-[16px]" />
          P-CAD 2004 PCB - [12...
        </div>
        <div className="ml-[660px] flex h-[15px] w-[17px] items-center justify-center bg-[#0a246a] text-[11px] leading-none text-white">EN</div>
        <div className="ml-[5px] h-[26px] w-[2px] border-r border-l border-r-white border-l-[#808080]" />
        <div className="ml-[4px] flex h-[25px] w-[205px] items-center border border-t-[#808080] border-l-[#808080] border-r-white border-b-white pl-[4px]">
          <Tray />
          <svg viewBox="0 0 14 18" className="h-[18px] w-[14px]">
            <path d="M1 6h3l5-4v14l-5-4H1z" fill="#c87858" stroke="#222" />
            <path d="M11 5c2 3 2 6 0 9" fill="none" stroke="#222" />
          </svg>
          <span className="ml-[8px] text-[12px] tracking-[0.2px] text-[#111]">13:17</span>
        </div>
      </div>

      <QuickLaunch />
    </div>
  );
}
